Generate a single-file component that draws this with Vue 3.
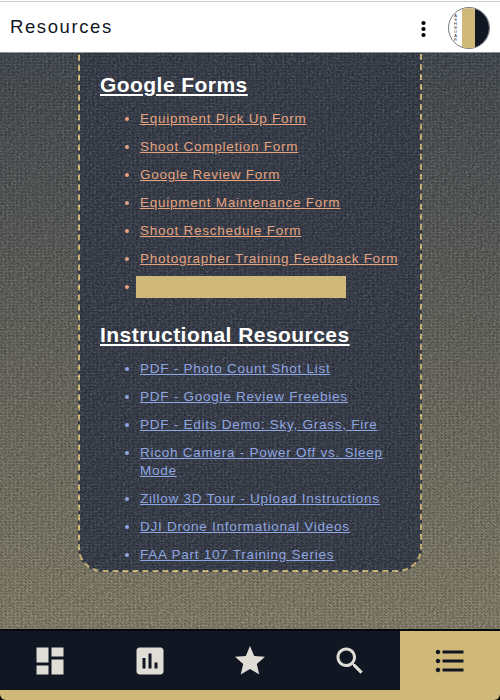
<script setup>
const sections = [
  {
    title: 'Google Forms',
    tone: 'orange',
    links: [
      'Equipment Pick Up Form',
      'Shoot Completion Form',
      'Google Review Form',
      'Equipment Maintenance Form',
      'Shoot Reschedule Form',
      'Photographer Training Feedback Form',
      ''
    ]
  },
  {
    title: 'Instructional Resources',
    tone: 'blue',
    links: [
      'PDF - Photo Count Shot List',
      'PDF - Google Review Freebies',
      'PDF - Edits Demo: Sky, Grass, Fire',
      'Ricoh Camera - Power Off vs. Sleep Mode',
      'Zillow 3D Tour - Upload Instructions',
      'DJI Drone Informational Videos',
      'FAA Part 107 Training Series'
    ]
  }
]

const tabs = [
  { name: 'dashboard', path: 'M3 13h8V3H3v10zm0 8h8v-6H3v6zm10 0h8V11h-8v10zm0-18v6h8V3h-8z' },
  { name: 'stats', path: 'M19 3H5c-1.1 0-2 .9-2 2v14c0 1.100.9 2 2 2h14c1.100 0 2-.9 2-2V5c0-1.100-.9-2-2-2zM9 17H7v-7h2v7zm4 0h-2V7h2v10zm4 0h-2v-4h2v4z' },
  { name: 'favorites', path: 'M12 17.270 18.180 21l-1.640-7.030L22 9.240l-7.190-.61L12 2 9.190 8.630 2 9.240l5.460 4.730L5.820 21z' },
  { name: 'search', path: 'M15.500 14h-.79l-.28-.27C15.410 12.590 16 11.110 16 9.500 16 5.910 13.090 3 9.500 3S3 5.910 3 9.500 5.910 16 9.500 16c1.610 0 3.090-.59 4.230-1.570l.27.28v.79l5 4.990L20.490 19l-4.990-5zm-6 0C7.010 14 5 11.990 5 9.500S7.010 5 9.500 5 14 7.010 14 9.500 11.990 14 9.500 14z' },
  { name: 'list', path: 'M4 10.500c-.83 0-1.500.67-1.500 1.500s.67 1.500 1.500 1.500 1.500-.67 1.500-1.500-.67-1.500-1.500-1.500zm0-6c-.83 0-1.500.67-1.500 1.500S3.170 7.500 4 7.500 5.500 6.830 5.500 6 4.830 4.500 4 4.500zm0 12c-.83 0-1.500.68-1.500 1.500s.68 1.500 1.500 1.500 1.500-.68 1.500-1.500-.67-1.500-1.500-1.500zM7 19h14v-2H7v2zm0-6h14v-2H7v2zm0-8v2h14V5H7z', active: true }
]
</script>

<template>
  <div class="screen">
    <header class="topbar">
      <h1>Resources</h1>
      <svg class="more" viewBox="0 0 8 20">
        <circle cx="3.500" cy="4" r="2.100" /><circle cx="3.500" cy="10" r="2.100" /><circle cx="3.500" cy="16" r="2.100" />
      </svg>
      <div class="avatar">
        <div class="brand"><span v-for="(c, i) in 'ASHBOAR'" :key="i">{{ c }}</span></div>
        <div class="gold"></div>
        <div class="navy"></div>
      </div>
    </header>

    <main class="content">
      <div class="card">
        <section v-for="s in sections" :key="s.title" :class="s.tone">
          <h2>{{ s.title }}</h2>
          <ul>
            <li v-for="(l, i) in s.links" :key="i" :class="{ tall: !l }">
              <a v-if="l">{{ l }}</a>
              <span v-else class="block"></span>
            </li>
          </ul>
        </section>
      </div>
      <svg class="fabric" width="500" height="576">
        <filter id="weave" x="0" y="0" width="100%" height="100%">
          <feTurbulence type="fractalNoise" baseFrequency="0.42 0.85" numOctaves="1" seed="4" />
          <feColorMatrix values="0 0 0 0 0.75  0 0 0 0 0.75  0 0 0 0 0.75  1.200 0 0 0 -0.52" />
        </filter>
        <filter id="shade" x="0" y="0" width="100%" height="100%">
          <feTurbulence type="fractalNoise" baseFrequency="0.4 0.9" numOctaves="1" seed="9" />
          <feColorMatrix values="0 0 0 0 0  0 0 0 0 0  0 0 0 0 0  1.500 0 0 0 -0.6" />
        </filter>
        <pattern id="twill" width="4" height="3" patternUnits="userSpaceOnUse">
          <rect width="2" height="1" fill="#000" opacity="0.35" />
          <rect x="1" y="1" width="2" height="1" fill="#000" opacity="0.35" />
          <rect x="2" y="2" width="2" height="1" fill="#aaa" opacity="0.12" />
        </pattern>
        <rect width="500" height="576" fill="url(#twill)" />
        <g transform="rotate(30 250 288)">
          <rect x="-150" y="-150" width="800" height="880" filter="url(#weave)" />
          <rect x="-150" y="-150" width="800" height="880" filter="url(#shade)" />
        </g>
      </svg>
    </main>

    <nav class="tabs">
      <div v-for="t in tabs" :key="t.name" class="tab" :class="{ active: t.active }">
        <svg viewBox="0 0 24 24"><path :d="t.path" /></svg>
      </div>
    </nav>
    <footer class="base"></footer>
  </div>
</template>

<style>
body {
  margin: 0;
  background: #000;
}
</style>

<style scoped>
.screen {
  width: 500px;
  height: 700px;
  display: flex;
  flex-direction: column;
  overflow: hidden;
  border-radius: 0 0 6px 6px;
  font-family: "Liberation Sans", Arial, sans-serif;
}
.topbar {
  flex: none;
  height: 53px;
  box-sizing: border-box;
  border-top: 1px solid #fff;
  border-bottom: 1px solid #8a9697;
  background: #fff;
  box-shadow: inset 0 1px #ccc;
  display: flex;
  align-items: center;
  padding: 1px 10px 0;
}
h1 {
  flex: 1;
  margin: 0;
  font-size: 18.5px;
  font-weight: 400;
  letter-spacing: 1.6px;
  line-height: 24px;
  color: #111722;
  padding-bottom: 1px;
}
.more {
  width: 8px;
  height: 20px;
  margin: 3px 20px 0 0;
}
.avatar {
  width: 40px;
  height: 40px;
  border: 1px solid #777b80;
  border-radius: 50%;
  overflow: hidden;
  display: flex;
  margin-top: 2px;
}
.brand {
  width: 13px;
  flex: none;
  display: flex;
  flex-direction: column;
  align-items: center;
  padding-top: 6px;
  font-size: 4px;
  line-height: 4px;
  color: #222;
}
.gold {
  width: 13px;
  background: #d0b978;
}
.navy {
  flex: 1;
  background: #111722;
}
.content {
  height: 576px;
  flex: none;
  overflow: hidden;
  position: relative;
  background: linear-gradient(#434a50, #575a59 28%, #716f63 62%, #88836c);
}
.card {
  width: 344px;
  height: 560px;
  box-sizing: border-box;
  margin: -41px auto 0;
  padding: 59px 18px 0 20px;
  border: 2px dashed #dfc681;
  border-radius: 24px;
  background: #373d4b;
}
.fabric {
  position: absolute;
  inset: 0;
  opacity: 0.5;
  pointer-events: none;
}
section {
  position: relative;
  z-index: 1;
}
h2 {
  margin: 0;
  font-size: 21px;
  line-height: 24px;
  letter-spacing: 0.45px;
  color: #fff;
  text-decoration: underline;
}
section + section {
  margin-top: 25px;
}
ul {
  margin: 13px 0 0;
  padding: 0 0 0 40px;
  font-size: 13.5px;
  letter-spacing: 0.75px;
  line-height: 18px;
}
li + li {
  margin-top: 10px;
}
li + li.tall {
  margin-top: 8px;
  line-height: 22px;
}
a {
  text-decoration: underline;
}
.orange ul {
  color: #e5a47f;
}
.blue ul {
  color: #8ea6e2;
}
.block {
  display: inline-block;
  vertical-align: top;
  width: 210px;
  height: 22px;
  margin-left: -4px;
  background: #d0b978;
}
.tabs {
  flex: none;
  height: 61px;
  box-sizing: border-box;
  border-top: 2px solid #05080d;
  background: #111722;
  display: grid;
  grid-template-columns: repeat(5, 1fr);
}
.tab {
  display: flex;
  align-items: center;
  justify-content: center;
  padding-top: 1px;
}
.tab svg {
  width: 36px;
  height: 36px;
  fill: #dfddd6;
}
.active {
  background: #d0b978;
}
.active svg {
  fill: #111722;
}
.base {
  flex: 1;
  background: #d0b978;
}
</style>
